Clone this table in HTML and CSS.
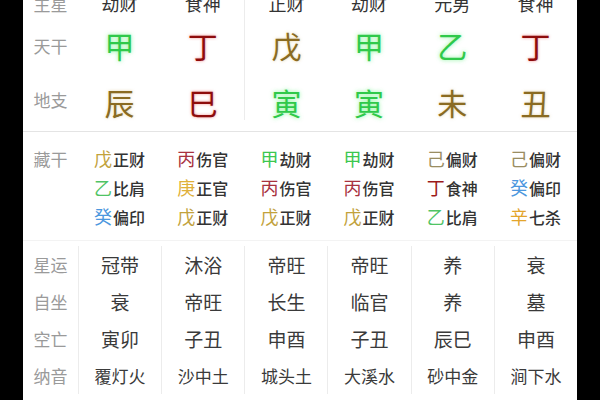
FILE: index.html
```html
<!DOCTYPE html>
<html lang="zh">
<head>
<meta charset="utf-8">
<link rel="stylesheet" href="styles.css">
</head>
<body>
<div class="page">
  <section class="top">
    <div class="lab r1">主星</div>
    <div class="star r1">劫财</div>
    <div class="star r1">食神</div>
    <div class="star r1 sep">正财</div>
    <div class="star r1">劫财</div>
    <div class="star r1">元男</div>
    <div class="star r1">食神</div>

    <div class="lab r2">天干</div>
    <div class="big r2 wood">甲</div>
    <div class="big r2 fire">丁</div>
    <div class="big r2 earth sep">戊</div>
    <div class="big r2 wood">甲</div>
    <div class="big r2 wood">乙</div>
    <div class="big r2 fire">丁</div>

    <div class="lab r3">地支</div>
    <div class="big r3 earth">辰</div>
    <div class="big r3 fire">巳</div>
    <div class="big r3 wood sep">寅</div>
    <div class="big r3 wood">寅</div>
    <div class="big r3 earth">未</div>
    <div class="big r3 earth">丑</div>
  </section>

  <section class="hidden">
    <div class="lab">藏干</div>
    <div class="hcol"><div class="hlist">
      <div class="hi"><span class="hs c-wu">戊</span>正财</div>
      <div class="hi"><span class="hs c-yi">乙</span>比肩</div>
      <div class="hi"><span class="hs c-gui">癸</span>偏印</div>
    </div></div>
    <div class="hcol"><div class="hlist">
      <div class="hi"><span class="hs c-bing">丙</span>伤官</div>
      <div class="hi"><span class="hs c-geng">庚</span>正官</div>
      <div class="hi"><span class="hs c-wu">戊</span>正财</div>
    </div></div>
    <div class="hcol"><div class="hlist">
      <div class="hi"><span class="hs c-jia">甲</span>劫财</div>
      <div class="hi"><span class="hs c-bing">丙</span>伤官</div>
      <div class="hi"><span class="hs c-wu">戊</span>正财</div>
    </div></div>
    <div class="hcol"><div class="hlist">
      <div class="hi"><span class="hs c-jia">甲</span>劫财</div>
      <div class="hi"><span class="hs c-bing">丙</span>伤官</div>
      <div class="hi"><span class="hs c-wu">戊</span>正财</div>
    </div></div>
    <div class="hcol"><div class="hlist">
      <div class="hi"><span class="hs c-ji">己</span>偏财</div>
      <div class="hi"><span class="hs c-ding">丁</span>食神</div>
      <div class="hi"><span class="hs c-yi">乙</span>比肩</div>
    </div></div>
    <div class="hcol"><div class="hlist">
      <div class="hi"><span class="hs c-ji">己</span>偏财</div>
      <div class="hi"><span class="hs c-gui">癸</span>偏印</div>
      <div class="hi"><span class="hs c-xin">辛</span>七杀</div>
    </div></div>
  </section>

  <section class="bottom">
    <div class="lab b">星运</div>
    <div class="val">冠带</div>
    <div class="val">沐浴</div>
    <div class="val">帝旺</div>
    <div class="val">帝旺</div>
    <div class="val">养</div>
    <div class="val">衰</div>

    <div class="lab b">自坐</div>
    <div class="val">衰</div>
    <div class="val">帝旺</div>
    <div class="val">长生</div>
    <div class="val">临官</div>
    <div class="val">养</div>
    <div class="val">墓</div>

    <div class="lab b">空亡</div>
    <div class="val">寅卯</div>
    <div class="val">子丑</div>
    <div class="val">申酉</div>
    <div class="val">子丑</div>
    <div class="val">辰巳</div>
    <div class="val">申酉</div>

    <div class="lab b">纳音</div>
    <div class="val na">覆灯火</div>
    <div class="val na">沙中土</div>
    <div class="val na">城头土</div>
    <div class="val na">大溪水</div>
    <div class="val na">砂中金</div>
    <div class="val na">涧下水</div>
  </section>
</div>
</body>
</html>
```
FILE: styles.css
```css
html, body {
  margin: 0;
  padding: 0;
  background: #000;
  height: 400px;
  overflow: hidden;
}
.page {
  width: 554px;
  height: 400px;
  margin-left: 23px;
  background: #fff;
  font-family: "Noto Sans CJK SC", "Noto Sans", sans-serif;
  overflow: hidden;
}
.top {
  display: grid;
  grid-template-columns: 55px repeat(6, 1fr);
  grid-template-rows: 30px 54px 48px;
  margin-top: -12px;
  padding-bottom: 11px;
  border-bottom: 1px solid #e4e4e4;
}
.lab {
  color: #9a9a9a;
  font-size: 17px;
  text-align: center;
}
.r1, .r2 {
  display: flex;
  align-items: center;
  justify-content: center;
}
.r3 {
  display: flex;
  align-items: flex-end;
  justify-content: center;
  line-height: 36px;
}
.r3.lab { padding-bottom: 2px; }
.sep { border-left: 1px solid #ececec; }
.star {
  font-size: 18px;
  color: #333;
}
.big {
  font-size: 30px;
}
.wood {
  color: #2fc94a;
  text-shadow: 0 0 4px rgba(80, 240, 110, 0.7);
}
.fire {
  color: #8e0c0c;
  text-shadow: 0 0 3px rgba(230, 40, 40, 0.55);
}
.earth {
  color: #8a6b22;
  text-shadow: 0 0 3px rgba(200, 170, 80, 0.5);
}
.hidden {
  display: grid;
  grid-template-columns: 55px repeat(6, 1fr);
  padding: 12px 0 9px;
  border-bottom: 1px solid #f3f3f3;
}
.hidden .lab {
  line-height: 29px;
}
.hcol {
  display: flex;
  justify-content: center;
}
.hi {
  line-height: 29px;
  height: 29px;
  font-size: 16px;
  color: #333;
  font-weight: 500;
  white-space: nowrap;
}
.hs {
  font-size: 18px;
  font-weight: 400;
  margin-right: 1px;
}
.c-wu { color: #c2a23c; }
.c-yi { color: #4fc465; }
.c-gui { color: #4c97de; }
.c-bing { color: #a8323f; }
.c-geng { color: #dfb03a; }
.c-jia { color: #3cc74f; }
.c-ji { color: #9a8d62; }
.c-ding { color: #9c1a1a; }
.c-xin { color: #e3a52c; }
.bottom {
  display: grid;
  grid-template-columns: 55px repeat(6, 1fr);
  grid-auto-rows: 37px;
  padding-top: 5px;
}
.b, .val {
  display: flex;
  align-items: center;
  justify-content: center;
}
.val {
  font-size: 19px;
  color: #3a3a3a;
  border-left: 1px solid #ececec;
}
.val.na {
  font-size: 17px;
}
```
